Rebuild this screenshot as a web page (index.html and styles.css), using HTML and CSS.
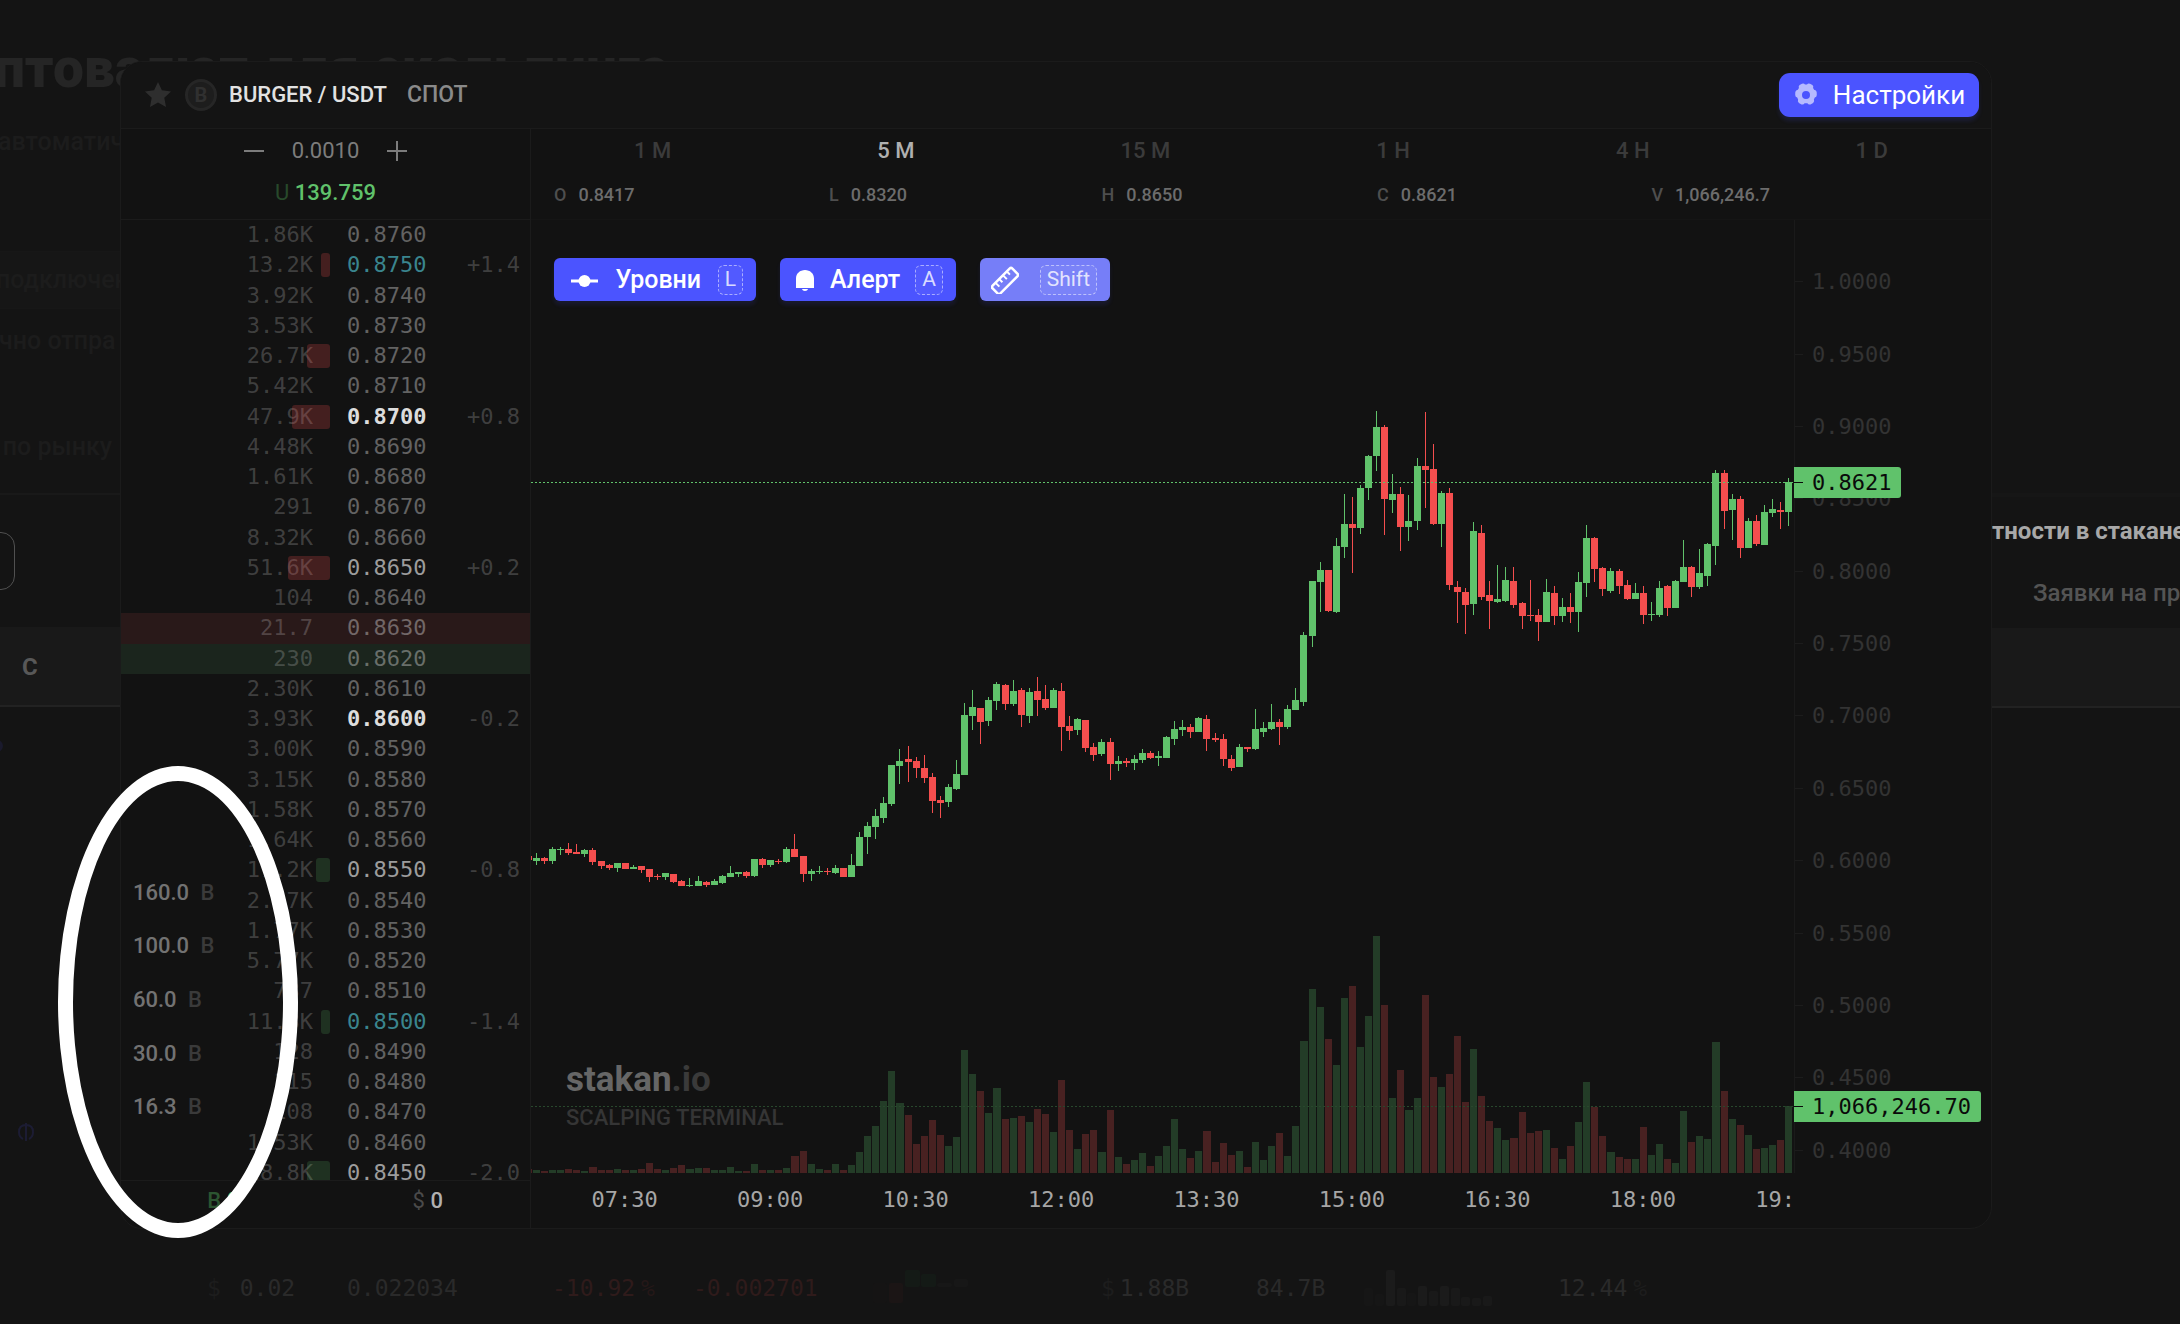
FILE: index.html
```html
<!DOCTYPE html>
<html lang="ru">
<head>
<meta charset="utf-8">
<meta name="viewport" content="width=device-width, initial-scale=1">
<title>BURGER / USDT</title>
<link rel="stylesheet" href="styles.css">
</head>
<body>
<div class="page">
  <h1 class="page-title">птовалют для скальпинга</h1>

  <aside class="side side-left">
    <p class="side-text side-text-auto">автоматич</p>
    <p class="side-text side-text-band">подключен</p>
    <p class="side-text side-text-send">чно отпра</p>
    <p class="side-text side-text-market">о по рынку</p>
    <div class="side-input"></div>
    <div class="side-head">C</div>
    <div class="side-dot"></div>
    <svg class="side-coin" viewBox="0 0 18 20" aria-hidden="true"><path d="M9 1v18M9 3C4 3 2 6 2 10s2 6 4 7M9 3c5 0 7 3 7 7s-2 6-4 7"/></svg>
  </aside>

  <main class="terminal">
    <header class="terminal-head">
      <svg class="star" viewBox="0 0 28 28" aria-hidden="true"><path d="M14 1l3.900 8.300 9.100 1.200-6.700 6.200 1.700 9.300L14 21.500 6 26l1.700-9.300L1 10.500l9.100-1.200z"/></svg>
      <span class="coin">B</span>
      <h2 class="pair">BURGER / USDT</h2>
      <span class="market">СПОТ</span>
      <button class="settings" type="button">
        <svg viewBox="0 0 26 26" aria-hidden="true"><path fill-rule="evenodd" d="M9 1.200q2-.8 3 .9h2q1-1.700 3-.9l2.400 1.300q1.400 1.100.7 3l1 1.800q2.200.2 2.600 2.200l.1 2.900q-.1 2-2 2.700l-.9 1.900q.9 2-.8 3.400l-2.600 1.500q-2 .7-3.100-1.100h-2.800q-1.100 1.800-3.100 1.100l-2.600-1.500q-1.700-1.400-.8-3.400l-.9-1.900q-1.900-.7-2-2.700l.1-2.900q.4-2 2.600-2.200l1-1.800q-.7-1.900.7-3zM13 8.500a4 4 0 1 0 0 8 4 4 0 0 0 0-8z" transform="translate(0 .5)"/></svg>
        Настройки
      </button>
    </header>

    <section class="book">
      <div class="book-head">
        <div class="stepper">
          <button class="step" type="button" aria-label="Уменьшить шаг"><svg viewBox="0 0 20 20"><path d="M0 10h20"/></svg></button>
          <span>0.0010</span>
          <button class="step" type="button" aria-label="Увеличить шаг"><svg viewBox="0 0 20 20"><path d="M0 10h20M10 0v20"/></svg></button>
        </div>
        <div class="balance"><span class="balance-unit">U</span> 139.759</div>
      </div>
      <div class="book-body">
        <table class="orders">
          <tbody>
            <tr><td>1.86K</td><td>0.8760</td><td></td></tr>
            <tr><td><i class="bar ask" style="width:9px"></i>13.2K</td><td class="level">0.8750</td><td>+1.4</td></tr>
            <tr><td>3.92K</td><td>0.8740</td><td></td></tr>
            <tr><td>3.53K</td><td>0.8730</td><td></td></tr>
            <tr><td><i class="bar ask" style="width:23px"></i>26.7K</td><td>0.8720</td><td></td></tr>
            <tr><td>5.42K</td><td>0.8710</td><td></td></tr>
            <tr><td><i class="bar ask" style="width:38px"></i>47.9K</td><td class="round">0.8700</td><td>+0.8</td></tr>
            <tr><td>4.48K</td><td>0.8690</td><td></td></tr>
            <tr><td>1.61K</td><td>0.8680</td><td></td></tr>
            <tr><td>291</td><td>0.8670</td><td></td></tr>
            <tr><td>8.32K</td><td>0.8660</td><td></td></tr>
            <tr><td><i class="bar ask" style="width:42px"></i>51.6K</td><td class="half">0.8650</td><td>+0.2</td></tr>
            <tr><td>104</td><td>0.8640</td><td></td></tr>
            <tr class="best-ask"><td>21.7</td><td>0.8630</td><td></td></tr>
            <tr class="best-bid"><td>230</td><td>0.8620</td><td></td></tr>
            <tr><td>2.30K</td><td>0.8610</td><td></td></tr>
            <tr><td>3.93K</td><td class="round">0.8600</td><td>-0.2</td></tr>
            <tr><td>3.00K</td><td>0.8590</td><td></td></tr>
            <tr><td>3.15K</td><td>0.8580</td><td></td></tr>
            <tr><td>1.58K</td><td>0.8570</td><td></td></tr>
            <tr><td>1.64K</td><td>0.8560</td><td></td></tr>
            <tr><td><i class="bar bid" style="width:14px"></i>17.2K</td><td class="half">0.8550</td><td>-0.8</td></tr>
            <tr><td>2.47K</td><td>0.8540</td><td></td></tr>
            <tr><td>1.77K</td><td>0.8530</td><td></td></tr>
            <tr><td>5.77K</td><td>0.8520</td><td></td></tr>
            <tr><td>737</td><td>0.8510</td><td></td></tr>
            <tr><td><i class="bar bid" style="width:9px"></i>11.3K</td><td class="level">0.8500</td><td>-1.4</td></tr>
            <tr><td>128</td><td>0.8490</td><td></td></tr>
            <tr><td>115</td><td>0.8480</td><td></td></tr>
            <tr><td>108</td><td>0.8470</td><td></td></tr>
            <tr><td>1.53K</td><td>0.8460</td><td></td></tr>
            <tr><td><i class="bar bid" style="width:23px"></i>28.8K</td><td class="half">0.8450</td><td>-2.0</td></tr>
          </tbody>
        </table>
        <div class="sizes">
          <button type="button">160.0 <span>B</span></button>
          <button type="button">100.0 <span>B</span></button>
          <button type="button">60.0 <span>B</span></button>
          <button type="button">30.0 <span>B</span></button>
          <button type="button">16.3 <span>B</span></button>
        </div>
      </div>
      <footer class="book-foot">
        <div class="foot-base"><span>B</span> 0</div>
        <div class="foot-quote"><span>$</span> 0</div>
      </footer>
    </section>

    <section class="chart">
      <div class="chart-head">
        <nav class="frames">
          <button type="button">1 M</button>
          <button type="button" class="active">5 M</button>
          <button type="button">15 M</button>
          <button type="button">1 H</button>
          <button type="button">4 H</button>
          <button type="button">1 D</button>
        </nav>
        <dl class="ohlc">
          <div><dt>O</dt><dd>0.8417</dd></div>
          <div><dt>L</dt><dd>0.8320</dd></div>
          <div><dt>H</dt><dd>0.8650</dd></div>
          <div><dt>C</dt><dd>0.8621</dd></div>
          <div><dt>V</dt><dd>1,066,246.7</dd></div>
        </dl>
      </div>
      <div class="chart-body">
        <div class="plot-column">
          <div class="plot">
            <div class="watermark">
              <strong>stakan<span>.io</span></strong>
              <small>SCALPING TERMINAL</small>
            </div>
            <svg class="candles" id="candles" role="img" aria-label="График цены"></svg>
            <div class="tools">
              <button type="button" class="tool">
                <svg viewBox="0 0 28 28" aria-hidden="true"><path d="M0 15h27" stroke="#fff" stroke-width="3"/><circle cx="13.500" cy="15" r="6" fill="#fff"/></svg>
                Уровни <kbd>L</kbd>
              </button>
              <button type="button" class="tool tool-alert">
                <svg viewBox="0 0 20 22" aria-hidden="true"><path fill="#fff" d="M1 19V9.500C1 4.500 5 1 10 1s9 3.500 9 8.500V19zM7 20h6c-.3 1.300-1.500 2-3 2s-2.700-.7-3-2z"/></svg>
                Алерт <kbd>A</kbd>
              </button>
              <button type="button" class="tool tool-ruler">
                <svg viewBox="0 0 28 28" aria-hidden="true"><g transform="rotate(-45 14 15)" fill="none" stroke="#fff" stroke-width="2.500"><rect x="0" y="9.500" width="28" height="11" rx="2"/><path d="M6 10v5M11.300 10v4M16.600 10v5M22 10v4" stroke-width="2"/></g></svg>
                <kbd>Shift</kbd>
              </button>
            </div>
          </div>
          <div class="times">
            <span>07:30</span><span>09:00</span><span>10:30</span><span>12:00</span><span>13:30</span><span>15:00</span><span>16:30</span><span>18:00</span><span>19:30</span>
          </div>
        </div>
        <div class="scale">
          <div class="scale-labels">
            <span>1.0000</span><span>0.9500</span><span>0.9000</span><span>0.8500</span><span>0.8000</span><span>0.7500</span><span>0.7000</span><span>0.6500</span><span>0.6000</span><span>0.5500</span><span>0.5000</span><span>0.4500</span><span>0.4000</span>
          </div>
          <output class="tag tag-price">0.8621</output>
          <output class="tag tag-volume">1,066,246.70</output>
        </div>
      </div>
    </section>
  </main>

  <aside class="side side-right">
    <div class="side-rule"></div>
    <p class="side-caption">тности в стакане</p>
    <p class="side-sub">Заявки на продажу</p>
    <div class="side-band"></div>
  </aside>

  <div class="ticker">
    <span class="t-price"><em>$</em> 0.02</span>
    <span class="t-last">0.022034</span>
    <span class="t-change down">-10.92<em>%</em></span>
    <span class="t-delta down">-0.002701</span>
    <svg class="t-spark" viewBox="0 0 96 44" aria-hidden="true">
      <g fill="#1b1515"><rect y="17" width="14" height="20" rx="2" fill="#151414"/><rect x="16" y="17" width="14" height="20" rx="2"/></g>
      <g fill="#141a16"><rect x="32" y="4" width="15" height="17" rx="2"/><rect x="48" y="8" width="15" height="13" rx="2"/></g>
      <g fill="#171717"><rect x="64" y="17" width="15" height="4" rx="2"/><rect x="81" y="13" width="14" height="8" rx="2"/></g>
    </svg>
    <span class="t-cap"><em>$</em>1.88B</span>
    <span class="t-vol">84.7B</span>
    <svg class="t-bars" viewBox="0 0 130 36" fill="#191919" aria-hidden="true">
      <rect y="18" width="9" height="18" rx="2" fill="#161616"/><rect x="11" y="24" width="9" height="12" rx="2" fill="#161616"/><rect x="22" width="9" height="36" rx="2" fill="#1b1b1b"/><rect x="33" y="18" width="9" height="18" rx="2"/><rect x="43" y="23" width="9" height="13" rx="2" fill="#161616"/><rect x="54" y="16" width="9" height="20" rx="2" fill="#1b1b1b"/><rect x="65" y="21" width="9" height="15" rx="2"/><rect x="76" y="16" width="9" height="20" rx="2" fill="#1b1b1b"/><rect x="87" y="18" width="9" height="18" rx="2"/><rect x="97" y="27" width="9" height="9" rx="2"/><rect x="108" y="28" width="9" height="8" rx="2"/><rect x="119" y="26" width="9" height="10" rx="2"/>
    </svg>
    <span class="t-share">12.44<em>%</em></span>
  </div>

  <div class="callout" aria-hidden="true"></div>
</div>
<script src="chart.js"></script>
</body>
</html>
```
FILE: styles.css
```css
:root {
  --bg: #141414;
  --panel: #121212;
  --line: #1b1b1b;
  --green: #60c26b;
  --red: #f44e4e;
  --blue: #4b54ff;
  --mono: "DejaVu Sans Mono", monospace;
}

* { box-sizing: border-box; }

body {
  margin: 0;
  background: var(--bg);
  color: #ddd;
  font: 22px/30px Roboto, sans-serif;
}

h1, h2, p, dl, dd { margin: 0; }

button {
  margin: 0;
  padding: 0;
  border: 0;
  background: none;
  color: inherit;
  font: inherit;
  cursor: pointer;
}

.page {
  position: relative;
  display: grid;
  grid-template-columns: 120px minmax(0, 1fr) 188px;
  grid-template-rows: 61px auto 95px;
  min-height: 100vh;
  overflow: hidden;
}

.page-title {
  position: absolute;
  top: 38px;
  left: -6px;
  color: #252525;
  font-size: 55px;
  font-weight: 900;
  line-height: 60px;
  white-space: nowrap;
}

/* Page behind the terminal */
.side {
  grid-row: 2;
  overflow: hidden;
  white-space: nowrap;
}
.side-left { grid-column: 1; }
.side-right { grid-column: 3; }
.side-text {
  color: #1c1c1c;
  font-size: 25px;
  font-weight: 500;
  line-height: 56px;
}
.side-text-auto { margin: 53px 0 81px -2px; }
.side-text-band { border: solid #171717; border-width: 1px 0; background: #161616; text-indent: -4px; }
.side-text-send { margin: 4px 0 50px -1px; }
.side-text-market { padding: 0 8px 18px 0; border-bottom: 2px solid #191919; direction: rtl; }
.side-input {
  width: 35px;
  height: 58px;
  margin: 37px 0 37px -20px;
  border: 1px solid #505050;
  border-radius: 14px;
}
.side-head {
  height: 80px;
  padding-left: 22px;
  border-bottom: 2px solid #222;
  background: #191919;
  color: #585858;
  font-size: 24px;
  font-weight: 700;
  line-height: 80px;
}
.side-dot {
  width: 16px;
  height: 12px;
  margin: 33px 0 0 -13px;
  border-radius: 8px;
  background: #1a1a2c;
}
.side-coin {
  display: block;
  width: 18px;
  height: 20px;
  margin: 370px 0 0 17px;
  fill: none;
  stroke: #1c1c33;
  stroke-width: 2;
}

.side-rule { height: 4px; margin-top: 432px; background: #161616; }
.side-caption {
  margin-top: 18px;
  color: #a8a8a8;
  font-size: 24px;
  font-weight: 700;
  line-height: 32px;
}
.side-sub {
  margin: 30px 0 19px 41px;
  color: #545454;
  font-size: 24px;
  font-weight: 500;
  line-height: 32px;
}
.side-band { height: 80px; border-bottom: 2px solid #222; background: #191919; }

/* Terminal */
.terminal {
  position: relative;
  grid-column: 2;
  grid-row: 2;
  display: grid;
  grid-template-columns: 410px minmax(0, 1fr);
  grid-template-rows: 67px auto;
  border: 1px solid var(--line);
  border-radius: 22px;
  background: var(--panel);
  overflow: hidden;
}

.terminal-head {
  grid-column: 1 / -1;
  display: flex;
  align-items: center;
  padding: 0 12px 0 23px;
  border-bottom: 1px solid var(--line);
  background: var(--bg);
}
.star { width: 28px; height: 28px; fill: #2e2e2e; }
.coin {
  width: 32px;
  height: 32px;
  margin: 0 12px 0 13px;
  border: 3px solid #262626;
  border-radius: 50%;
  background: #1d1d1d;
  color: #303030;
  font-size: 20px;
  font-weight: 700;
  line-height: 26px;
  text-align: center;
}
.pair { color: #e2e2e2; font-size: 22px; font-weight: 500; }
.market { margin-left: 20px; color: #8a8a8a; font-size: 23px; font-weight: 500; }
.settings {
  display: flex;
  align-items: center;
  justify-content: center;
  gap: 14px;
  width: 200px;
  height: 44px;
  margin-left: auto;
  border-radius: 11px;
  background: var(--blue);
  box-shadow: 0 4px 4px rgba(75, 84, 255, .15);
  color: #fff;
  font-size: 26px;
}
.settings svg { width: 26px; height: 26px; fill: #b5b9ff; }

/* Order book */
.book {
  display: flex;
  flex-direction: column;
  border-right: 1px solid var(--line);
}
.book-head {
  height: 91px;
  padding-top: 7px;
  border-bottom: 1px solid var(--line);
}
.stepper {
  display: flex;
  align-items: center;
  justify-content: center;
  gap: 28px;
  color: #7c7c7c;
}
.step { width: 20px; height: 20px; }
.step svg { display: block; width: 20px; height: 20px; stroke: #7c7c7c; stroke-width: 2; }
.balance {
  margin-top: 12px;
  color: var(--green);
  font-weight: 500;
  text-align: center;
}
.balance-unit { color: #28492b; font-weight: 400; }

.book-body {
  position: relative;
  height: 960px;
  overflow: hidden;
}
.orders {
  width: 100%;
  height: 968px;
  border-collapse: collapse;
  table-layout: fixed;
  color: rgba(255, 255, 255, .2);
  font: 22px/30px var(--mono);
}
.orders td { padding: 0; }
.orders td:nth-child(1) { position: relative; width: 209px; padding-right: 17px; text-align: right; }
.orders td:nth-child(2) { width: 99px; padding-left: 17px; color: rgba(255, 255, 255, .34); }
.orders td:nth-child(3) { padding-right: 10px; text-align: right; }
.orders td.level { color: #3a858e; }
.orders td.round { color: #ddd; font-weight: 700; }
.orders td.half { color: #9c9c9c; }
.best-ask { background: #291919; }
.best-bid { background: #1b251d; }
.bar {
  position: absolute;
  top: 3px;
  right: 0;
  height: 24px;
  border-radius: 3px;
}
.bar.ask { background: rgba(244, 78, 78, .22); }
.bar.bid { background: rgba(96, 194, 107, .18); }

.sizes {
  position: absolute;
  left: 0;
  bottom: 46px;
  display: grid;
  grid-auto-rows: 1fr;
  width: 109px;
  height: 268px;
  border-radius: 0 14px 14px 0;
  background: rgba(255, 255, 255, .004);
}
.sizes button {
  padding-left: 12px;
  color: #727272;
  font-weight: 500;
  text-align: left;
}
.sizes span { margin-left: 6px; color: #3a3a3a; }

.book-foot {
  display: grid;
  grid-template-columns: 1fr 1fr;
  flex: 1;
  align-items: center;
  padding-bottom: 7px;
  border-top: 1px solid var(--line);
  color: #b0b0b0;
  font-weight: 500;
  text-align: center;
}
.foot-base { color: var(--green); }
.foot-base span { color: #2c5531; }
.foot-quote span { color: #4a4a4a; font-weight: 400; }

/* Chart */
.chart { min-width: 0; }
.chart-head {
  height: 91px;
  padding-top: 7px;
  border-bottom: 1px solid #151515;
}
.frames { display: flex; }
.frames button { flex: 1 1 auto; color: #3b3b3b; font-weight: 500; }
.frames .active { color: #b0b0b0; }
.ohlc {
  display: flex;
  justify-content: space-between;
  margin-top: 14px;
  padding: 0 221px 0 23px;
  font-size: 18px;
  font-weight: 500;
}
.ohlc div { display: flex; gap: 12px; }
.ohlc dt { color: #4e4e4e; }
.ohlc dd { color: #6c6c6c; }

.chart-body {
  display: grid;
  grid-template-columns: minmax(0, 1fr) 197px;
}
.plot-column { overflow: hidden; }
.plot { position: relative; height: 953px; }
.candles {
  position: absolute;
  inset: 0;
  width: 100%;
  height: 100%;
  shape-rendering: crispEdges;
}
.watermark {
  position: absolute;
  left: 35px;
  bottom: 40px;
  display: grid;
}
.watermark strong { color: #666; font-size: 35px; font-weight: 700; line-height: 46px; }
.watermark strong span { color: #3a3a3a; }
.watermark small { color: #353535; font-size: 22px; font-weight: 500; line-height: 30px; }

.tools {
  position: absolute;
  top: 38px;
  left: 23px;
  display: flex;
  gap: 24px;
}
.tool {
  display: flex;
  align-items: center;
  justify-content: space-between;
  width: 202px;
  height: 43px;
  padding: 0 13px 0 17px;
  border-radius: 6px;
  background: var(--blue);
  box-shadow: 0 4px 4px rgba(75, 84, 255, .12);
  color: #fff;
  font-size: 25px;
  font-weight: 500;
}
.tool svg { width: 28px; height: 28px; }
.tool kbd {
  height: 30px;
  padding: 0 6px;
  border: 1px dashed rgba(255, 255, 255, .5);
  border-radius: 6px;
  background: rgba(255, 255, 255, .04);
  color: rgba(255, 255, 255, .8);
  font: 21px/26px Roboto, sans-serif;
}
.tool-alert { width: 176px; padding-left: 15px; }
.tool-alert svg { width: 20px; height: 22px; }
.tool-ruler { width: 130px; padding-left: 11px; background: #767ef8; }

.times {
  display: grid;
  grid-template-columns: repeat(9, 1fr);
  margin: 12px -67px 13px 21px;
  color: #a6a6a6;
  font: 22px/30px var(--mono);
  text-align: center;
}

.scale {
  position: relative;
  font: 22px/32px var(--mono);
}
.scale::before {
  content: "";
  position: absolute;
  inset: 0 auto 55px 0;
  width: 1px;
  background: #1a1a1a;
}
.scale-labels {
  display: grid;
  grid-auto-rows: 1fr;
  align-items: center;
  height: 941px;
  margin-top: 26px;
  color: #333;
}
.scale-labels span::before,
.tag::before {
  content: "";
  display: inline-block;
  width: 9px;
  height: 1px;
  margin-right: 9px;
  background: #1c1c1c;
  vertical-align: 7px;
}
.tag {
  position: absolute;
  left: 0;
  height: 31px;
  line-height: 31px;
  padding-right: 10px;
  border-radius: 0 3px 3px 0;
  background: var(--green);
  color: #0a0a0a;
}
.tag::before { background: #0a0a0a; }
.tag-price { top: 247px; }
.tag-volume { top: 871px; }

/* Row below the terminal */
.ticker {
  grid-column: 1 / -1;
  grid-row: 3;
  display: grid;
  grid-template-columns: 140px 205px 141px 180px 228px 155px 108px 194px 1fr;
  align-items: center;
  padding: 22px 0 0 207px;
  color: #2a2a2a;
  font: 23px/30px var(--mono);
}
.ticker em { color: #1d1d1d; font-style: normal; }
.ticker .down { color: #2f1b1b; }
.ticker .down em { color: #251818; }
.t-change em, .t-share em { margin-left: 6px; }
.t-price em, .t-cap em { margin-right: 5px; }
.t-spark { width: 96px; height: 44px; }
.t-bars { width: 130px; height: 36px; }

.callout {
  position: absolute;
  top: 766px;
  left: 58px;
  width: 240px;
  height: 472px;
  border: 15px solid #fff;
  border-radius: 50%;
  pointer-events: none;
}
```
FILE: chart.js
```js
// One candle per entry: direction, high, body top, body bottom, low, volume.
const series = `
r 456 456 460 460 4|g 453 458 461 465 3|r 457 458 461 464 2|g 447 449 461 464 3|g 447 449 450 455 3
r 443 449 453 455 4|r 444 452 454 454 3|g 449 450 454 457 2|r 448 450 462 465 6|r 461 461 466 469 3
r 464 465 468 470 3|g 463 463 468 472 4|r 463 463 469 469 3|g 465 467 469 469 3|r 466 466 470 473 4
r 469 469 477 482 10|r 474 476 477 480 4|g 473 473 477 480 3|r 474 474 482 483 5|r 480 481 486 486 8
g 478 485 486 487 4|g 476 481 486 486 5|r 481 482 485 487 5|g 479 481 485 485 3|g 475 476 483 484 3
g 466 473 477 477 6|g 472 472 474 477 2|r 471 472 476 478 2|g 459 459 476 477 9|r 458 459 465 468 3
g 460 460 465 467 3|r 459 461 462 464 3|g 447 449 462 463 5|r 434 449 457 457 17|r 456 456 474 482 22
g 469 471 474 481 9|g 466 471 472 474 4|r 468 471 472 475 3|g 465 468 473 474 9|r 468 468 477 477 3
g 454 465 477 477 8|g 432 437 466 466 21|g 422 426 437 454 37|g 409 416 427 439 47|g 397 403 418 423 72
g 365 365 404 406 102|g 349 361 366 384 70|r 346 359 362 382 58|r 357 361 368 378 29|r 355 368 378 383 37
r 373 377 401 413 53|r 396 400 403 418 38|g 384 387 402 407 27|g 360 374 389 390 36|g 303 315 375 375 123
g 290 307 316 330 99|r 308 308 322 344 82|g 297 300 321 326 60|g 282 284 301 310 85|r 284 285 304 310 54
g 280 291 304 306 55|r 288 290 315 327 57|g 288 292 316 323 51|r 277 291 300 316 64|r 285 299 308 310 59
g 288 290 308 308 41|r 283 291 327 351 93|r 316 326 331 340 43|g 318 319 330 335 24|r 320 320 348 352 39
r 343 347 355 361 43|g 339 342 354 356 21|r 338 342 364 380 63|g 356 361 364 371 16|r 358 361 363 367 9
g 355 359 363 370 13|g 349 353 360 363 20|r 351 353 358 359 7|g 351 356 358 366 17|g 336 337 358 358 27
g 321 329 339 345 54|g 320 327 330 336 24|r 324 327 332 338 15|g 317 318 332 332 22|r 315 319 339 351 42
r 333 338 340 342 11|r 334 339 359 366 30|r 355 359 368 371 18|g 344 347 367 367 22|r 347 347 349 352 6
g 309 329 349 350 31|g 322 328 332 337 13|g 304 322 329 330 27|r 319 322 327 345 40|g 305 309 327 329 17
g 288 300 310 310 47|g 232 235 302 306 132|g 181 181 236 247 184|g 162 170 182 212 166|r 170 170 211 212 134
g 138 146 212 213 108|g 94 124 147 158 175|r 97 124 128 173 187|g 85 88 128 134 126|g 55 56 88 100 157
g 11 27 56 71 237|r 25 27 99 135 168|g 74 94 100 113 75|r 87 94 127 151 103|g 95 121 127 141 63
g 58 66 121 130 75|r 12 66 70 108 178|r 44 69 124 125 96|g 91 93 124 147 86|r 88 93 185 190 99
r 181 187 192 223 137|r 188 192 205 234 71|g 122 131 204 215 124|r 125 133 197 200 77|r 181 195 201 229 52
g 165 199 202 203 45|g 167 180 201 202 33|r 167 181 205 208 35|r 202 203 216 229 61|r 180 215 216 221 40
r 209 215 222 241 42|g 179 192 222 222 43|r 186 193 216 225 25|g 198 207 216 222 14|r 193 207 212 223 27
g 172 182 212 232 51|g 125 138 183 197 91|r 137 138 169 182 66|r 167 168 189 196 37|g 168 171 191 193 21
r 169 171 186 194 16|r 180 185 199 200 14|g 183 193 199 199 14|r 186 193 215 224 46|g 202 214 215 221 18
g 181 188 215 217 29|r 185 186 208 216 14|g 180 181 208 208 10|g 140 167 182 182 62|r 166 167 187 197 31
g 149 173 187 189 37|g 143 144 176 186 34|g 70 73 146 165 131|r 70 73 111 129 82|g 94 99 110 140 54
r 96 99 148 158 48|g 118 121 148 148 38|r 115 121 144 146 24|g 105 112 145 145 25|g 99 109 113 117 28
r 102 110 112 129 33|g 78 82 112 126 67
`.trim().split(/[|\n]/).map(row => row.split(' '));

const svg = document.getElementById('candles');
const colors = { g: '#60c26b', r: '#f44e4e' };
const volumeColors = { g: '#233c27', r: '#482121' };
const top0 = 180;
const base = 953;

function add(tag, attrs) {
  const el = document.createElementNS('http://www.w3.org/2000/svg', tag);
  for (const key in attrs) el.setAttribute(key, attrs[key]);
  svg.appendChild(el);
}

function rect(x, y, width, height, fill) {
  add('rect', { x, y, width, height, fill });
}

// Bars snap to whole pixels so that their edges stay sharp.
const center = i => Math.floor(i * 8.0792 + 0.337) - 3;

series.forEach(([dir, high, bodyTop, bodyBottom, low, volume], i) => {
  const x = center(i);
  rect(x - 3, base - volume, center(i + 1) - x - 1, +volume, volumeColors[dir]);
  rect(x, top0 + +high, 1, low - high, colors[dir]);
  rect(x - 3, top0 + +bodyTop, 7, bodyBottom - bodyTop, colors[dir]);
});

function level(y, stroke) {
  add('line', { x1: 0, x2: '100%', y1: y, y2: y, stroke, 'stroke-dasharray': '2 2' });
}
level(262.5, '#60c26b');
level(886.5, '#28482c');
```
